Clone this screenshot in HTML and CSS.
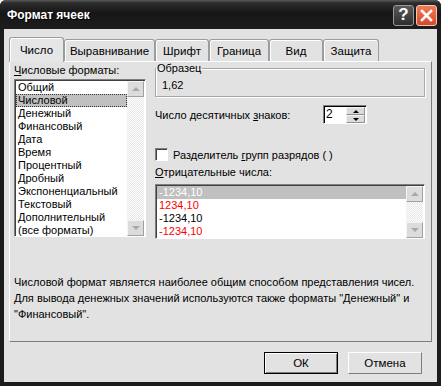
FILE: index.html
```html
<!DOCTYPE html>
<html lang="ru">

<head>
  <meta charset="UTF-8">
  <title>Формат ячеек</title>
  <link rel="stylesheet" href="styles.css">
</head>

<body>
  <div class="window">
    <div class="titlebar">
      <span class="title">Формат ячеек</span>
      <div class="caption-buttons">
        <span class="cap-btn help">?</span>
        <span class="cap-btn close">
          <svg width="13" height="13" viewBox="0 0 13 13"><path d="M2 2 L11 11 M11 2 L2 11" stroke="#fff" stroke-width="2.6" stroke-linecap="square"/></svg>
        </span>
      </div>
    </div>

    <div class="client">
      <div class="tabs">
        <div class="tab selected w-num">Число</div>
        <div class="tab w-align">Выравнивание</div>
        <div class="tab w-font">Шрифт</div>
        <div class="tab w-border">Граница</div>
        <div class="tab w-view">Вид</div>
        <div class="tab w-prot">Защита</div>
      </div>

      <div class="panel">
        <div class="columns">
          <div class="left-col">
            <div class="label"><u>Ч</u>исловые форматы:</div>
            <div class="listbox formats">
              <ul class="items">
                <li>Общий</li>
                <li class="current">Числовой</li>
                <li>Денежный</li>
                <li>Финансовый</li>
                <li>Дата</li>
                <li>Время</li>
                <li>Процентный</li>
                <li>Дробный</li>
                <li>Экспоненциальный</li>
                <li>Текстовый</li>
                <li>Дополнительный</li>
                <li>(все форматы)</li>
              </ul>
              <div class="scrollbar">
                <span class="sb-btn up"></span>
                <span class="sb-track"></span>
                <span class="sb-btn down"></span>
              </div>
            </div>
          </div>

          <div class="right-col">
            <fieldset class="sample">
              <legend>Образец</legend>
              <div class="sample-value">1,62</div>
            </fieldset>

            <div class="spin-row">
              <span>Число десятичных <u>з</u>наков:</span>
              <div class="spin">
                <span class="spin-input">2</span>
                <span class="spin-btns">
                  <span class="spin-btn"><i class="tri-up"></i></span>
                  <span class="spin-btn"><i class="tri-down"></i></span>
                </span>
              </div>
            </div>

            <label class="check-row">
              <span class="checkbox"></span>
              <span>Разделитель <u>г</u>рупп разрядов ( )</span>
            </label>

            <div class="label neg-label"><u>О</u>трицательные числа:</div>
            <div class="listbox negatives">
              <ul class="items">
                <li class="current inverse">-1234,10</li>
                <li class="red">1234,10</li>
                <li>-1234,10</li>
                <li class="red">-1234,10</li>
              </ul>
              <div class="scrollbar">
                <span class="sb-btn up"></span>
                <span class="sb-track"></span>
                <span class="sb-btn down"></span>
              </div>
            </div>
          </div>
        </div>

        <p class="description">Числовой формат является наиболее общим способом представления чисел.<br>
          Для вывода денежных значений используются также форматы "Денежный" и "Финансовый".</p>
      </div>

      <div class="button-row">
        <button class="btn default">ОК</button>
        <button class="btn">Отмена</button>
      </div>
    </div>
  </div>
</body>

</html>
```

FILE: styles.css
```css
body {
  margin: 0;
  padding: 0;
  background: #ffffff;
  font-family: "Liberation Sans", Arial, sans-serif;
  font-size: 11px;
  color: #000;
}

.window {
  width: 441px;
  height: 386px;
  box-sizing: border-box;
  background: #1c1c1c;
  border-radius: 6px 6px 0 0;
  padding: 0 4px 4px;
  display: flex;
  flex-direction: column;
}

/* title bar */
.titlebar {
  height: 29px;
  flex: none;
  margin: 0 -4px;
  padding: 0 4px 0 7px;
  border-radius: 6px 6px 0 0;
  background: linear-gradient(#5a5a5a 0, #2c2c2c 3px, #161616 45%, #1e1e1e 100%);
  display: flex;
  align-items: center;
  justify-content: space-between;
}

.title {
  color: #fff;
  font-weight: bold;
  font-size: 12px;
  text-shadow: 1px 1px 0 #000;
}

.caption-buttons {
  display: flex;
  gap: 2px;
  margin-top: 1px;
}

.cap-btn {
  width: 21px;
  height: 21px;
  box-sizing: border-box;
  border-radius: 3px;
  border: 1px solid #9a9a9a;
  display: flex;
  align-items: center;
  justify-content: center;
}

.help {
  background: linear-gradient(#5a5a5a, #2e2e2e);
  color: #fff;
  font-weight: bold;
  font-size: 17px;
}

.close {
  background: linear-gradient(#ef7b55, #d8482a);
  border-color: #f3c9b8;
}

/* client area */
.client {
  flex: 1;
  background: #e2e2e2;
  padding: 8px 5px 0;
  display: flex;
  flex-direction: column;
}

.tabs {
  display: flex;
  align-items: flex-end;
  height: 24px;
  position: relative;
  z-index: 1;
  font-size: 11.5px;
}

.tab {
  box-sizing: border-box;
  height: 22px;
  border: 1px solid #9c9c9c;
  border-bottom: none;
  border-radius: 3px 3px 0 0;
  box-shadow: inset 1px 1px 0 #fff;
  background: #e2e2e2;
  display: flex;
  align-items: center;
  justify-content: center;
}

.tab.selected {
  height: 25px;
  margin-bottom: -1px;
  background: #e6e6e6;
}

.w-num { width: 55px; }
.w-align { width: 91px; }
.w-font { width: 54px; }
.w-border { width: 60px; }
.w-view { width: 54px; }
.w-prot { width: 56px; }

.panel {
  height: 281px;
  box-sizing: border-box;
  border: 1px solid;
  border-color: #fff #7c7c7c #7c7c7c #fff;
  background: #e2e2e2;
  padding: 0 4px;
}

.columns {
  display: flex;
  gap: 9px;
}

.left-col {
  width: 132px;
}

.right-col {
  width: 270px;
}

.label {
  height: 16px;
  line-height: 16px;
  margin-bottom: 1px;
}

/* list boxes */
.listbox {
  box-sizing: border-box;
  display: flex;
  background: #fff;
  border: 1px solid;
  border-color: #7f7f7f #fff #fff #7f7f7f;
  box-shadow: inset 1px 1px 0 #404040;
}

.formats {
  height: 158px;
}

.negatives {
  height: 55px;
}

.items {
  flex: 1;
  list-style: none;
  margin: 0;
  padding: 1px 0 0 1px;
}

.items li {
  height: 13px;
  line-height: 13px;
  padding-left: 2px;
  white-space: nowrap;
}

.items li.current {
  background: #c0c0c0;
  outline: 1px dotted #333;
  outline-offset: -1px;
}

.items li.inverse {
  color: #fff;
  outline: none;
}

.items li.red {
  color: #f00;
}

.scrollbar {
  width: 17px;
  display: flex;
  flex-direction: column;
  padding: 1px 1px 0 0;
}

.sb-track {
  flex: 1;
  background: repeating-conic-gradient(#e6e6e6 0 25%, #fff 0 50%) 0 0 / 2px 2px;
}

.sb-btn {
  height: 16px;
  box-sizing: border-box;
  background: #dcdcdc;
  border: 1px solid;
  border-color: #f4f4f4 #a0a0a0 #a0a0a0 #f4f4f4;
  position: relative;
}

.sb-btn::after {
  content: "";
  position: absolute;
  left: 4px;
  top: 5px;
  border-left: 4px solid transparent;
  border-right: 4px solid transparent;
}

.sb-btn.up::after {
  border-bottom: 4px solid #a8a8a8;
}

.sb-btn.down::after {
  border-top: 4px solid #a8a8a8;
}

/* sample group */
.sample {
  margin: 0;
  padding: 2px 6px 5px;
  height: 35px;
  box-sizing: border-box;
  border: 1px solid #a8a8a8;
  box-shadow: 1px 1px 0 #fff, inset 1px 1px 0 #fff;
}

.sample legend {
  padding: 0 1px;
  margin-left: -6px;
  line-height: 13px;
}

.sample-value {
  line-height: 13px;
  margin-top: 2px;
}

.spin-row {
  display: flex;
  align-items: center;
  justify-content: space-between;
  width: 212px;
  margin-top: 8px;
  height: 19px;
}

.spin {
  display: flex;
  width: 44px;
  height: 19px;
  box-sizing: border-box;
  border: 1px solid;
  border-color: #7f7f7f #fff #fff #7f7f7f;
  box-shadow: inset 1px 1px 0 #000;
  background: #fff;
}

.spin-input {
  flex: 1;
  padding: 1px 0 0 2px;
  line-height: 15px;
  font-size: 12px;
}

.spin-btns {
  width: 19px;
  display: flex;
  flex-direction: column;
  padding: 1px 1px 0 0;
}

.spin-btn {
  flex: 1;
  background: #dcdcdc;
  border: 1px solid;
  border-color: #f4f4f4 #909090 #909090 #f4f4f4;
  display: flex;
  align-items: center;
  justify-content: center;
}

.tri-up,
.tri-down {
  border-left: 3px solid transparent;
  border-right: 3px solid transparent;
}

.tri-up {
  border-bottom: 3px solid #000;
}

.tri-down {
  border-top: 3px solid #000;
}

.check-row {
  display: flex;
  align-items: center;
  gap: 5px;
  margin-top: 24px;
  height: 13px;
}

.checkbox {
  width: 13px;
  height: 13px;
  box-sizing: border-box;
  background: #fff;
  border: 1px solid;
  border-color: #808080 #fff #fff #808080;
  box-shadow: inset 1px 1px 0 #404040;
}

.neg-label {
  margin-top: 3px;
  margin-bottom: 4px;
}

.description {
  margin: 35px 0 0;
  line-height: 16px;
  width: 410px;
}

/* dialog buttons */
.button-row {
  display: flex;
  justify-content: flex-end;
  gap: 10px;
  margin-top: 10px;
  padding-right: 10px;
}

.btn {
  width: 74px;
  height: 22px;
  font-family: "Liberation Sans", Arial, sans-serif;
  font-size: 11.5px;
  background: #e2e2e2;
  border: 1px solid;
  border-color: #fff #7c7c7c #7c7c7c #fff;
  padding: 0;
}

.btn.default {
  border: 1px solid #000;
  box-shadow: inset 1px 1px 0 #fff, inset -1px -1px 0 #7c7c7c;
}
```
